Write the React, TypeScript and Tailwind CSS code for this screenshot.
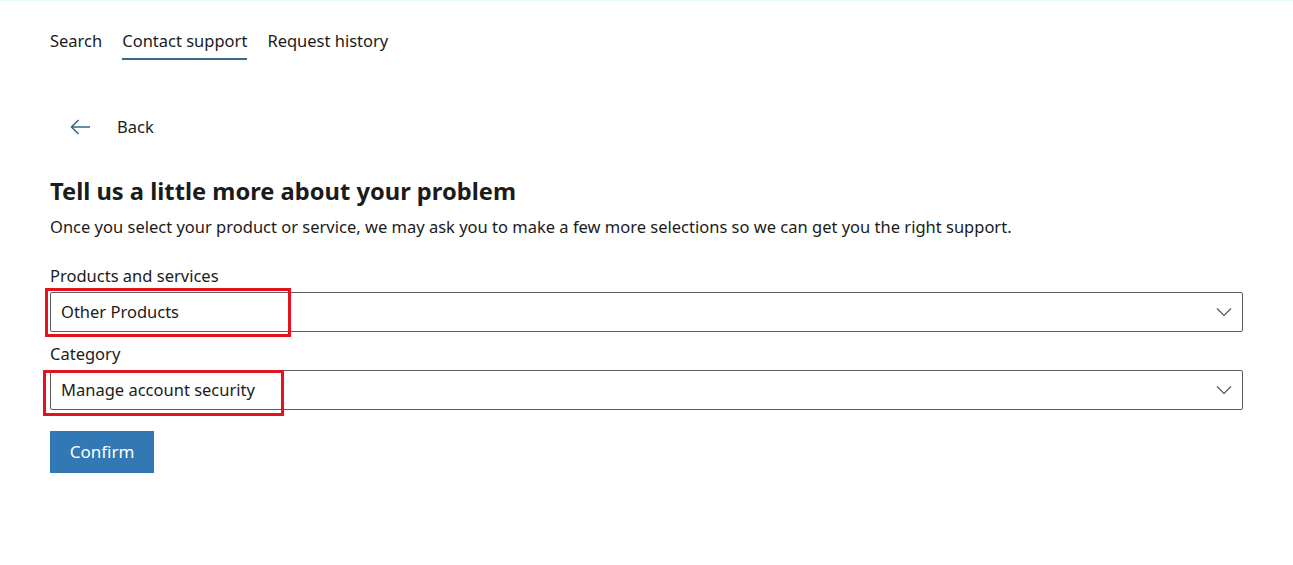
const font = { fontFamily: '"Noto Sans", "Open Sans", sans-serif' };

const ChevronDown = () => (
  <svg width="16" height="10" viewBox="0 0 16 10" fill="none">
    <path d="M1 1.5l7 7 7-7" stroke="#555" strokeWidth="1.2" />
  </svg>
);

const Select = ({ value, mark }: { value: string; mark: string }) => (
  <div className="relative">
    <div className="flex h-10 items-center justify-between rounded-[2px] border border-[#5f5f5f] pl-[10px] pr-[10px]">
      <span className="pt-[2px] text-[16.5px] text-[#1b1b1b]">{value}</span>
      <ChevronDown />
    </div>
    <div className={`pointer-events-none absolute border-[3px] border-[#e3121f] ${mark}`} />
  </div>
);

export default function App() {
  const tabs = ["Search", "Contact support", "Request history"];
  return (
    <div className="min-h-[565px] w-full border-t border-[#e6f6fb] bg-white text-[#1b1b1b]" style={font}>
      <div className="px-[50px]">
        <nav className="flex gap-5 pt-[28px]">
          {tabs.map((t, i) => (
            <div
              key={t}
              className={`pb-[5px] text-[16.5px] leading-[24px] ${i === 1 ? "border-b-2 border-[#3a6889]" : "border-b-2 border-transparent"}`}
            >
              {t}
            </div>
          ))}
        </nav>

        <div className="mt-[55px] flex items-center gap-[26px] pl-[20px]">
          <svg width="21" height="16" viewBox="0 0 21 16" fill="none">
            <path d="M20 8H1.5M8.5 1L1.5 8l7 7" stroke="#3a6889" strokeWidth="1.6" />
          </svg>
          <span className="text-[16.5px]">Back</span>
        </div>

        <h1 className="mt-[36px] text-[23.7px] font-bold leading-[30px] text-[#1b1b1b]">
          Tell us a little more about your problem
        </h1>
        <p className="mt-[9px] text-[16.5px] leading-[24px]">
          Once you select your product or service, we may ask you to make a few more selections so we can get you the right support.
        </p>

        <div className="mt-[25px] flex flex-col">
          <label className="mb-[4px] text-[16.5px] leading-[24px]">Products and services</label>
          <Select value="Other Products" mark="-left-[5px] -top-[4px] h-[49px] w-[246px]" />
          <label className="mb-[4px] mt-[10px] text-[16.5px] leading-[24px]">Category</label>
          <Select value="Manage account security" mark="-left-[7px] top-0 h-[46px] w-[241px]" />
        </div>

        <button className="mt-[21px] h-[42px] w-[104px] bg-[#3278b4] text-[17px] text-white">Confirm</button>
      </div>
    </div>
  );
}
